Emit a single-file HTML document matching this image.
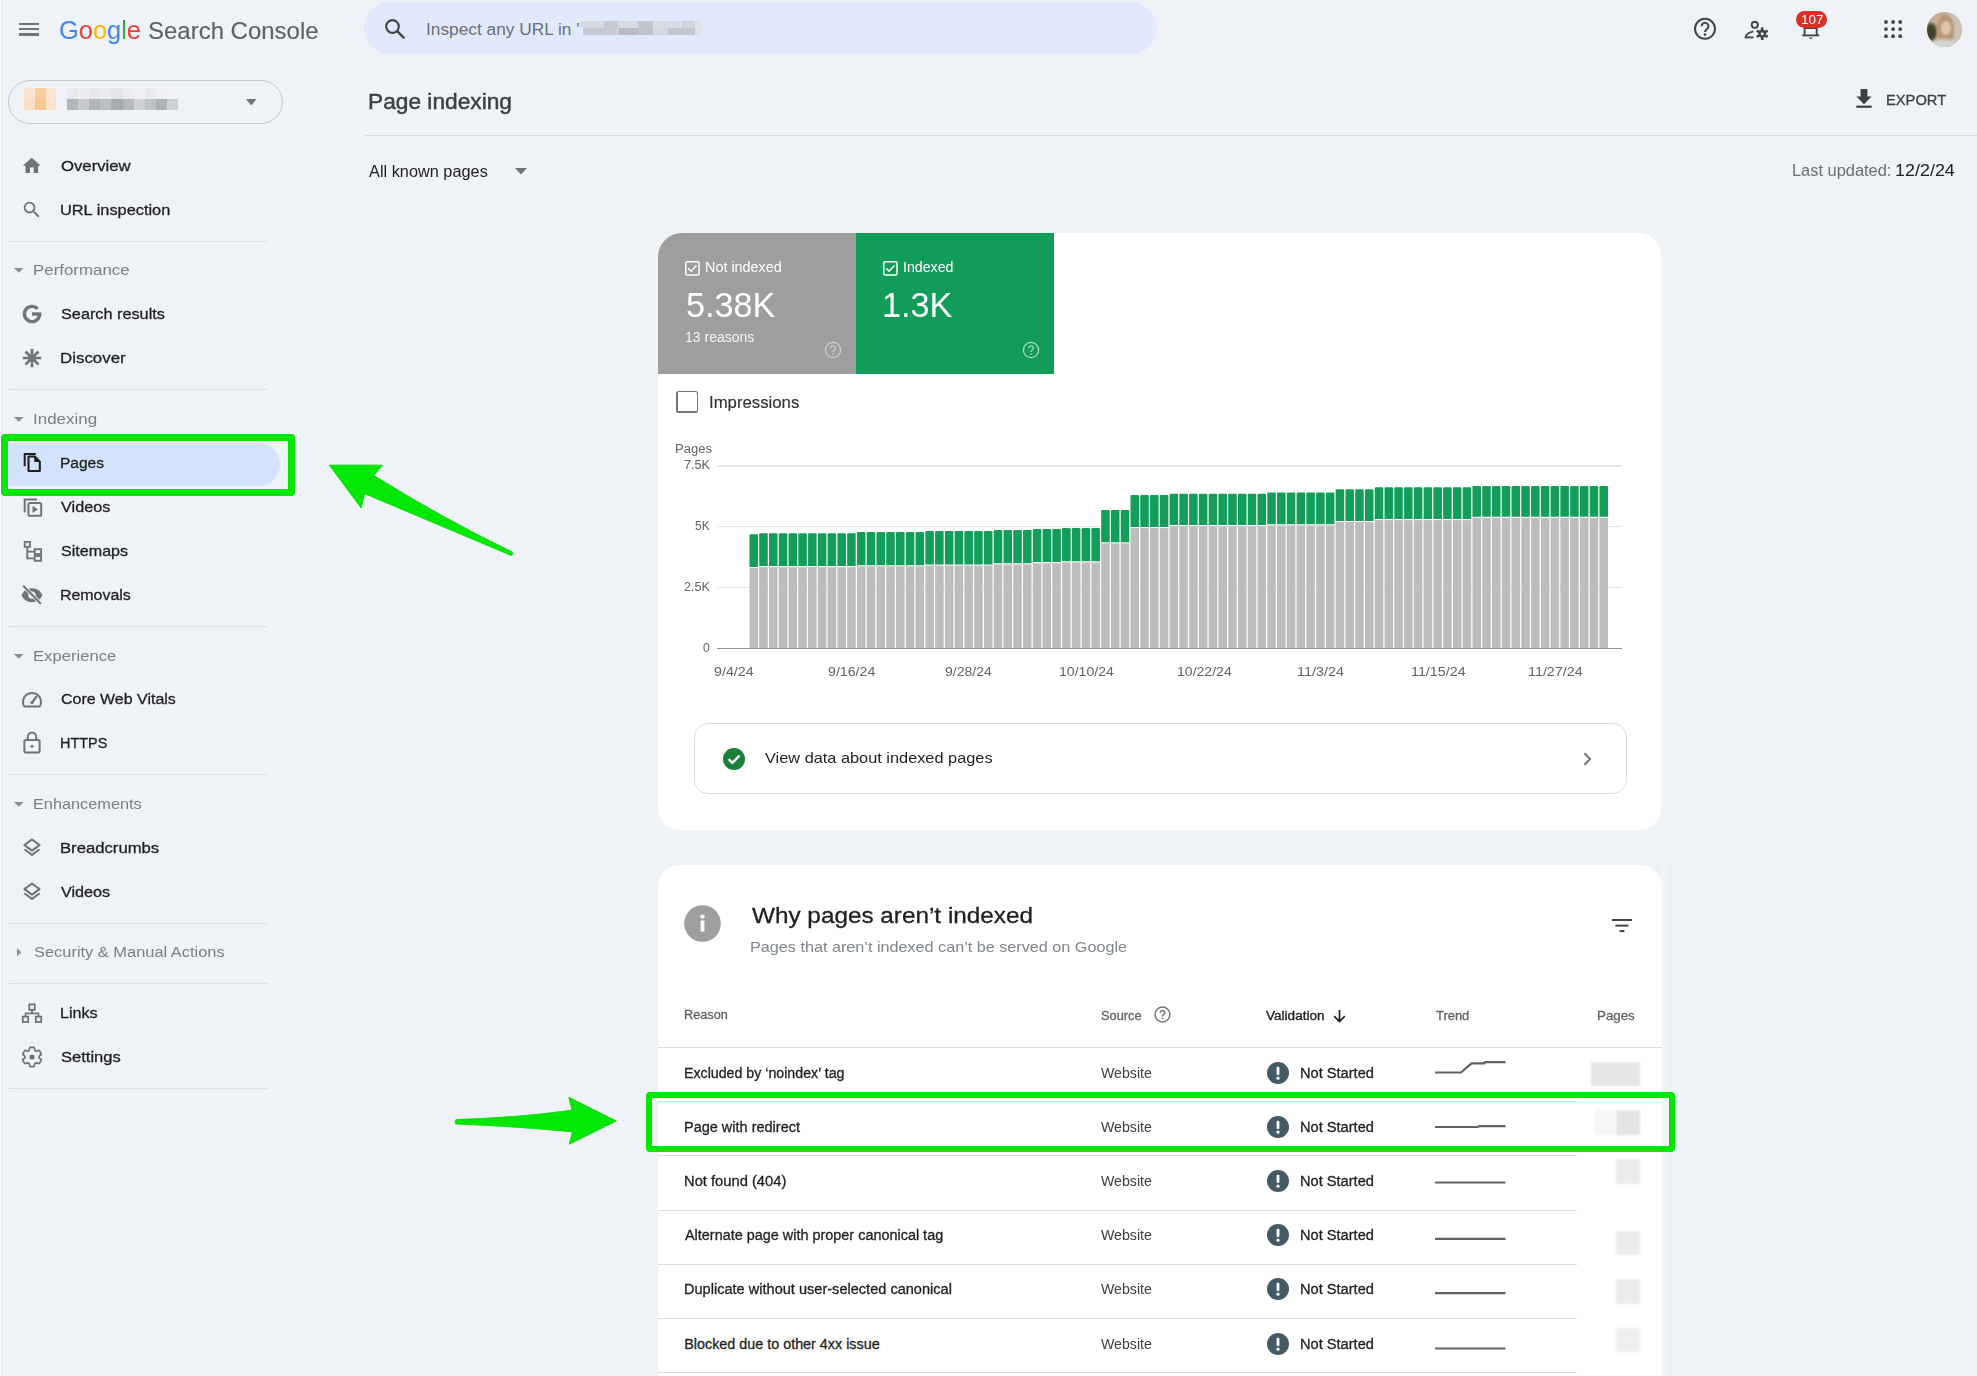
<!DOCTYPE html>
<html><head><meta charset="utf-8"><title>Page indexing - Search Console</title>
<style>
html,body{margin:0;padding:0;}
body{width:1977px;height:1376px;overflow:hidden;position:relative;background:#eff2f7;font-family:"Liberation Sans",sans-serif;}
.t{position:absolute;white-space:pre;}
svg{overflow:visible;}
</style></head><body>
<div style="position:absolute;left:0px;top:0px;width:1.2px;height:1376px;background:#fcfdfe"></div>
<div style="position:absolute;left:1.2px;top:0px;width:1.8px;height:1376px;background:#eaedf3"></div>
<div style="position:absolute;left:12px;top:220px;width:1px;height:1156px;background:#f3f6fc"></div>
<div style="position:absolute;left:19.3px;top:22.6px;width:20px;height:2.2px;background:#707478"></div>
<div style="position:absolute;left:19.3px;top:28.0px;width:20px;height:2.2px;background:#707478"></div>
<div style="position:absolute;left:19.3px;top:33.4px;width:20px;height:2.2px;background:#707478"></div>
<div style="position:absolute;left:364px;top:2px;width:793px;height:52px;background:#e1eafc;border-radius:26px"></div>
<svg style="position:absolute;left:384px;top:18px;" width="22" height="22" viewBox="0 0 22 22"><circle cx="8.5" cy="8.5" r="6.3" fill="none" stroke="#444746" stroke-width="2.2"/><line x1="13.2" y1="13.2" x2="19.5" y2="19.5" stroke="#444746" stroke-width="2.4" stroke-linecap="square"/></svg>
<div style="position:absolute;left:579.9px;top:21.2px;width:24.1px;height:6.8px;background:#d6d9e0"></div>
<div style="position:absolute;left:604.0px;top:21.2px;width:13.5px;height:6.8px;background:#c5c9d2"></div>
<div style="position:absolute;left:617.5px;top:21.2px;width:20.5px;height:6.8px;background:#d8dbe2"></div>
<div style="position:absolute;left:638.0px;top:21.2px;width:14.9px;height:6.8px;background:#c1c5ce"></div>
<div style="position:absolute;left:652.9px;top:21.2px;width:27.6px;height:6.8px;background:#d8dce6"></div>
<div style="position:absolute;left:680.5px;top:21.2px;width:14.2px;height:6.8px;background:#d0d4dc"></div>
<div style="position:absolute;left:694.6px;top:21.2px;width:7.1px;height:6.8px;background:#dfe2ea"></div>
<div style="position:absolute;left:583.1px;top:28px;width:34.3px;height:6.7px;background:#c5c9d1"></div>
<div style="position:absolute;left:617.5px;top:28px;width:20.5px;height:6.7px;background:#b9bcc5"></div>
<div style="position:absolute;left:638.0px;top:28px;width:14.9px;height:6.7px;background:#bfc3cc"></div>
<div style="position:absolute;left:652.9px;top:28px;width:14.9px;height:6.7px;background:#d3d7e0"></div>
<div style="position:absolute;left:667.7px;top:28px;width:26.9px;height:6.7px;background:#c2c6cf"></div>
<div style="position:absolute;left:694.6px;top:28px;width:7.1px;height:6.7px;background:#dde1ea"></div>
<svg style="position:absolute;left:1693px;top:17px;" width="24" height="24" viewBox="0 0 24 24"><circle cx="12" cy="11.8" r="10" fill="none" stroke="#444746" stroke-width="2"/><path d="M8.6 9.2a3.4 3.4 0 1 1 5.4 2.8c-1.2.8-2 1.3-2 3" fill="none" stroke="#444746" stroke-width="2"/><circle cx="12" cy="17.6" r="1.3" fill="#444746"/></svg>
<svg style="position:absolute;left:1744px;top:20px;" width="26" height="22" viewBox="0 0 26 22"><circle cx="10.8" cy="4.8" r="3.1" fill="none" stroke="#444746" stroke-width="1.9"/><path d="M1.4 17.4C2.2 14.4 5 12.3 8.6 11.6" fill="none" stroke="#444746" stroke-width="1.9" stroke-linecap="round"/><line x1="1.4" y1="17.4" x2="9.6" y2="17.4" stroke="#444746" stroke-width="1.9"/><circle cx="18.2" cy="13.7" r="3.9" fill="#444746"/><rect x="16.9" y="7.4" width="2.6" height="3" fill="#444746" transform="rotate(0 18.2 13.7)"/><rect x="16.9" y="7.4" width="2.6" height="3" fill="#444746" transform="rotate(60 18.2 13.7)"/><rect x="16.9" y="7.4" width="2.6" height="3" fill="#444746" transform="rotate(120 18.2 13.7)"/><rect x="16.9" y="7.4" width="2.6" height="3" fill="#444746" transform="rotate(180 18.2 13.7)"/><rect x="16.9" y="7.4" width="2.6" height="3" fill="#444746" transform="rotate(240 18.2 13.7)"/><rect x="16.9" y="7.4" width="2.6" height="3" fill="#444746" transform="rotate(300 18.2 13.7)"/><circle cx="18.2" cy="13.7" r="1.5" fill="#eff2f7"/></svg>
<svg style="position:absolute;left:1800px;top:22px;" width="22" height="20" viewBox="0 0 22 20"><path d="M4.6 13.3V6h12.1v7.3" fill="none" stroke="#444746" stroke-width="1.9"/><line x1="2.2" y1="13.4" x2="19.2" y2="13.4" stroke="#444746" stroke-width="1.9"/><path d="M8.6 15.4h4.2l-2.1 1.8z" fill="#444746"/></svg>
<div style="position:absolute;left:1796px;top:11px;width:31px;height:17px;background:#d93025;border-radius:9px"></div>
<svg style="position:absolute;left:1883.5px;top:20.3px;" width="18" height="18" viewBox="0 0 18 18"><circle cx="2.0" cy="2.0" r="1.9" fill="#444746"/><circle cx="2.0" cy="9.1" r="1.9" fill="#444746"/><circle cx="2.0" cy="16.2" r="1.9" fill="#444746"/><circle cx="9.1" cy="2.0" r="1.9" fill="#444746"/><circle cx="9.1" cy="9.1" r="1.9" fill="#444746"/><circle cx="9.1" cy="16.2" r="1.9" fill="#444746"/><circle cx="16.2" cy="2.0" r="1.9" fill="#444746"/><circle cx="16.2" cy="9.1" r="1.9" fill="#444746"/><circle cx="16.2" cy="16.2" r="1.9" fill="#444746"/></svg>
<div style="position:absolute;left:1927px;top:11.8px;width:35px;height:35px;border-radius:50%;overflow:hidden;background:#c6ae99"><div style="position:absolute;left:20px;top:0;width:16px;height:35px;background:#cbc4bc;filter:blur(2px)"></div><div style="position:absolute;left:-2px;top:11px;width:12px;height:18px;border-radius:50%;background:#3b4228;filter:blur(1.5px)"></div><div style="position:absolute;left:10px;top:3px;width:17px;height:30px;border-radius:45%;background:#b89672;filter:blur(1.2px)"></div><div style="position:absolute;left:14px;top:9px;width:10px;height:14px;border-radius:50%;background:#e0c6b0;filter:blur(1px)"></div><div style="position:absolute;left:4px;top:27px;width:26px;height:14px;border-radius:50%;background:#d4d4d2;filter:blur(1.5px)"></div></div>
<div style="position:absolute;left:8.3px;top:80.3px;width:274.7px;height:43.6px;box-sizing:border-box;border:1px solid #c4c7cc;border-radius:22px"></div>
<div style="position:absolute;left:24.0px;top:88px;width:10.8px;height:11px;background:#fbe3cf"></div>
<div style="position:absolute;left:24.0px;top:99px;width:10.8px;height:11px;background:#fce0c6"></div>
<div style="position:absolute;left:34.8px;top:88px;width:10.8px;height:11px;background:#f8cc9c"></div>
<div style="position:absolute;left:34.8px;top:99px;width:10.8px;height:11px;background:#f7c792"></div>
<div style="position:absolute;left:45.6px;top:88px;width:10.8px;height:11px;background:#fce6d2"></div>
<div style="position:absolute;left:45.6px;top:99px;width:10.8px;height:11px;background:#fce4cb"></div>
<div style="position:absolute;left:66.8px;top:88px;width:11.15px;height:11px;background:#e8eaee"></div>
<div style="position:absolute;left:66.8px;top:99px;width:11.15px;height:11px;background:#b3b6bb"></div>
<div style="position:absolute;left:78.0px;top:88px;width:11.15px;height:11px;background:#eceef1"></div>
<div style="position:absolute;left:78.0px;top:99px;width:11.15px;height:11px;background:#c8cacd"></div>
<div style="position:absolute;left:89.1px;top:88px;width:11.15px;height:11px;background:#e6e8ec"></div>
<div style="position:absolute;left:89.1px;top:99px;width:11.15px;height:11px;background:#b0b3b8"></div>
<div style="position:absolute;left:100.2px;top:88px;width:11.15px;height:11px;background:#e9ebef"></div>
<div style="position:absolute;left:100.2px;top:99px;width:11.15px;height:11px;background:#bbbec3"></div>
<div style="position:absolute;left:111.4px;top:88px;width:11.15px;height:11px;background:#e4e6ea"></div>
<div style="position:absolute;left:111.4px;top:99px;width:11.15px;height:11px;background:#a8abb0"></div>
<div style="position:absolute;left:122.5px;top:88px;width:11.15px;height:11px;background:#eaecf0"></div>
<div style="position:absolute;left:122.5px;top:99px;width:11.15px;height:11px;background:#b6b9bd"></div>
<div style="position:absolute;left:133.7px;top:88px;width:11.15px;height:11px;background:#edeff2"></div>
<div style="position:absolute;left:133.7px;top:99px;width:11.15px;height:11px;background:#cfd1d4"></div>
<div style="position:absolute;left:144.8px;top:88px;width:11.15px;height:11px;background:#e8eaee"></div>
<div style="position:absolute;left:144.8px;top:99px;width:11.15px;height:11px;background:#bfc2c6"></div>
<div style="position:absolute;left:156.0px;top:88px;width:11.15px;height:11px;background:#eef0f3"></div>
<div style="position:absolute;left:156.0px;top:99px;width:11.15px;height:11px;background:#aeb1b6"></div>
<div style="position:absolute;left:167.2px;top:88px;width:11.15px;height:11px;background:#f0f2f5"></div>
<div style="position:absolute;left:167.2px;top:99px;width:11.15px;height:11px;background:#cfd2d5"></div>
<svg style="position:absolute;left:245.5px;top:98.8px;" width="11" height="7" viewBox="0 0 11 7"><path d="M0 0h10.5L5.25 6.4z" fill="#707478"/></svg>
<div style="position:absolute;left:8.3px;top:241px;width:260px;height:1px;background:#dde0e5"></div>
<svg style="position:absolute;left:14.4px;top:268px;" width="10" height="5" viewBox="0 0 10 5"><path d="M0 0h9.6L4.8 4.8z" fill="#8a8e92"/></svg>
<div style="position:absolute;left:8.3px;top:389px;width:260px;height:1px;background:#dde0e5"></div>
<svg style="position:absolute;left:14.4px;top:416.7px;" width="10" height="5" viewBox="0 0 10 5"><path d="M0 0h9.6L4.8 4.8z" fill="#8a8e92"/></svg>
<div style="position:absolute;left:8px;top:442.5px;width:272px;height:43.2px;background:#d3e3fd;border-radius:0 22px 22px 0"></div>
<div style="position:absolute;left:8.3px;top:626px;width:260px;height:1px;background:#dde0e5"></div>
<svg style="position:absolute;left:14.4px;top:653.6px;" width="10" height="5" viewBox="0 0 10 5"><path d="M0 0h9.6L4.8 4.8z" fill="#8a8e92"/></svg>
<div style="position:absolute;left:8.3px;top:774px;width:260px;height:1px;background:#dde0e5"></div>
<svg style="position:absolute;left:14.4px;top:802.3px;" width="10" height="5" viewBox="0 0 10 5"><path d="M0 0h9.6L4.8 4.8z" fill="#8a8e92"/></svg>
<div style="position:absolute;left:8.3px;top:923px;width:260px;height:1px;background:#dde0e5"></div>
<svg style="position:absolute;left:16.5px;top:948px;" width="5" height="9" viewBox="0 0 5 9"><path d="M0 0v8.6L4.3 4.3z" fill="#8a8e92"/></svg>
<div style="position:absolute;left:8.3px;top:983px;width:260px;height:1px;background:#dde0e5"></div>
<div style="position:absolute;left:8.3px;top:1088px;width:260px;height:1px;background:#dde0e5"></div>
<svg style="position:absolute;left:1856px;top:88.5px;" width="16" height="19" viewBox="0 0 16 19"><path d="M4.6 0h6.8v7.6h4.2L8 15.2 0.4 7.6h4.2z" fill="#3c4043"/><rect x="0.4" y="16.6" width="15.2" height="2.2" fill="#3c4043"/></svg>
<div style="position:absolute;left:364px;top:135px;width:1613px;height:1px;background:#dadde2"></div>
<svg style="position:absolute;left:515px;top:168.4px;" width="12" height="7" viewBox="0 0 12 7"><path d="M0 0h12L6 6.6z" fill="#707478"/></svg>
<div style="position:absolute;left:658px;top:233px;width:1003px;height:597px;background:#fff;border-radius:24px 22px 22px 22px"></div>
<div style="position:absolute;left:658px;top:233px;width:198px;height:140.6px;background:#9e9e9e;border-radius:24px 0 0 0"></div>
<div style="position:absolute;left:856px;top:233px;width:198px;height:140.6px;background:#119d59"></div>
<svg style="position:absolute;left:684.8px;top:260.6px;" width="15" height="15" viewBox="0 0 15 15"><rect x="0.75" y="0.75" width="13.3" height="13.3" rx="1.6" fill="none" stroke="#fff" stroke-width="1.5"/><path d="M3.3 7.4l2.8 2.8 5.4-5.6" fill="none" stroke="#fff" stroke-width="1.5"/></svg>
<svg style="position:absolute;left:824.2px;top:340.9px;" width="18" height="18" viewBox="0 0 18 18"><circle cx="9" cy="9" r="7.6" fill="none" stroke="#cfcfcf" stroke-width="1.3"/><path d="M6.7 7.2a2.3 2.3 0 1 1 3.4 2c-.8.5-1.1.9-1.1 1.8" fill="none" stroke="#cfcfcf" stroke-width="1.3"/><circle cx="9" cy="12.9" r=".8" fill="#cfcfcf"/></svg>
<svg style="position:absolute;left:882.6px;top:260.6px;" width="15" height="15" viewBox="0 0 15 15"><rect x="0.75" y="0.75" width="13.3" height="13.3" rx="1.6" fill="none" stroke="#fff" stroke-width="1.5"/><path d="M3.3 7.4l2.8 2.8 5.4-5.6" fill="none" stroke="#fff" stroke-width="1.5"/></svg>
<svg style="position:absolute;left:1022px;top:340.7px;" width="18" height="18" viewBox="0 0 18 18"><circle cx="9" cy="9" r="7.6" fill="none" stroke="#a8d8bd" stroke-width="1.3"/><path d="M6.7 7.2a2.3 2.3 0 1 1 3.4 2c-.8.5-1.1.9-1.1 1.8" fill="none" stroke="#a8d8bd" stroke-width="1.3"/><circle cx="9" cy="12.9" r=".8" fill="#a8d8bd"/></svg>
<div style="position:absolute;left:676.4px;top:391.2px;width:21.2px;height:21.4px;box-sizing:border-box;border:solid #767676;border-width:1.8px 1.9px 2.7px 2.6px;border-radius:2.5px"></div>
<div style="position:absolute;left:717px;top:465px;width:905px;height:1.7px;background:#e8e8e8"></div>
<div style="position:absolute;left:717px;top:526px;width:905px;height:1px;background:#e4e4e4"></div>
<div style="position:absolute;left:717px;top:587px;width:905px;height:1px;background:#e4e4e4"></div>
<div style="position:absolute;left:717px;top:648px;width:905px;height:1px;background:#8f9499"></div>
<svg style="position:absolute;left:0px;top:0px;pointer-events:none" width="1977" height="1376" viewBox="0 0 1977 1376"><rect x="749.46" y="568.10" width="8.55" height="79.90" fill="#bdbdbd"/><path d="M749.46 567.00V535.50q0 -1.2 1.2 -1.2h6.15q1.2 0 1.2 1.2V567.00z" fill="#129d59"/><rect x="759.23" y="567.10" width="8.55" height="80.90" fill="#bdbdbd"/><path d="M759.23 566.00V534.40q0 -1.2 1.2 -1.2h6.15q1.2 0 1.2 1.2V566.00z" fill="#129d59"/><rect x="769.00" y="567.10" width="8.55" height="80.90" fill="#bdbdbd"/><path d="M769.00 566.00V534.40q0 -1.2 1.2 -1.2h6.15q1.2 0 1.2 1.2V566.00z" fill="#129d59"/><rect x="778.77" y="567.10" width="8.55" height="80.90" fill="#bdbdbd"/><path d="M778.77 566.00V534.40q0 -1.2 1.2 -1.2h6.15q1.2 0 1.2 1.2V566.00z" fill="#129d59"/><rect x="788.54" y="567.10" width="8.55" height="80.90" fill="#bdbdbd"/><path d="M788.54 566.00V534.40q0 -1.2 1.2 -1.2h6.15q1.2 0 1.2 1.2V566.00z" fill="#129d59"/><rect x="798.31" y="567.10" width="8.55" height="80.90" fill="#bdbdbd"/><path d="M798.31 566.00V534.40q0 -1.2 1.2 -1.2h6.15q1.2 0 1.2 1.2V566.00z" fill="#129d59"/><rect x="808.08" y="567.10" width="8.55" height="80.90" fill="#bdbdbd"/><path d="M808.08 566.00V534.40q0 -1.2 1.2 -1.2h6.15q1.2 0 1.2 1.2V566.00z" fill="#129d59"/><rect x="817.85" y="567.10" width="8.55" height="80.90" fill="#bdbdbd"/><path d="M817.85 566.00V534.40q0 -1.2 1.2 -1.2h6.15q1.2 0 1.2 1.2V566.00z" fill="#129d59"/><rect x="827.62" y="567.10" width="8.55" height="80.90" fill="#bdbdbd"/><path d="M827.62 566.00V534.40q0 -1.2 1.2 -1.2h6.15q1.2 0 1.2 1.2V566.00z" fill="#129d59"/><rect x="837.39" y="567.10" width="8.55" height="80.90" fill="#bdbdbd"/><path d="M837.39 566.00V534.40q0 -1.2 1.2 -1.2h6.15q1.2 0 1.2 1.2V566.00z" fill="#129d59"/><rect x="847.16" y="567.10" width="8.55" height="80.90" fill="#bdbdbd"/><path d="M847.16 566.00V534.40q0 -1.2 1.2 -1.2h6.15q1.2 0 1.2 1.2V566.00z" fill="#129d59"/><rect x="856.93" y="566.30" width="8.55" height="81.70" fill="#bdbdbd"/><path d="M856.93 565.20V533.30q0 -1.2 1.2 -1.2h6.15q1.2 0 1.2 1.2V565.20z" fill="#129d59"/><rect x="866.70" y="566.30" width="8.55" height="81.70" fill="#bdbdbd"/><path d="M866.70 565.20V533.30q0 -1.2 1.2 -1.2h6.15q1.2 0 1.2 1.2V565.20z" fill="#129d59"/><rect x="876.47" y="566.30" width="8.55" height="81.70" fill="#bdbdbd"/><path d="M876.47 565.20V533.30q0 -1.2 1.2 -1.2h6.15q1.2 0 1.2 1.2V565.20z" fill="#129d59"/><rect x="886.24" y="566.30" width="8.55" height="81.70" fill="#bdbdbd"/><path d="M886.24 565.20V533.30q0 -1.2 1.2 -1.2h6.15q1.2 0 1.2 1.2V565.20z" fill="#129d59"/><rect x="896.01" y="566.30" width="8.55" height="81.70" fill="#bdbdbd"/><path d="M896.01 565.20V533.30q0 -1.2 1.2 -1.2h6.15q1.2 0 1.2 1.2V565.20z" fill="#129d59"/><rect x="905.78" y="566.30" width="8.55" height="81.70" fill="#bdbdbd"/><path d="M905.78 565.20V533.30q0 -1.2 1.2 -1.2h6.15q1.2 0 1.2 1.2V565.20z" fill="#129d59"/><rect x="915.55" y="566.30" width="8.55" height="81.70" fill="#bdbdbd"/><path d="M915.55 565.20V533.30q0 -1.2 1.2 -1.2h6.15q1.2 0 1.2 1.2V565.20z" fill="#129d59"/><rect x="925.32" y="565.50" width="8.55" height="82.50" fill="#bdbdbd"/><path d="M925.32 564.40V532.30q0 -1.2 1.2 -1.2h6.15q1.2 0 1.2 1.2V564.40z" fill="#129d59"/><rect x="935.09" y="565.50" width="8.55" height="82.50" fill="#bdbdbd"/><path d="M935.09 564.40V532.30q0 -1.2 1.2 -1.2h6.15q1.2 0 1.2 1.2V564.40z" fill="#129d59"/><rect x="944.86" y="565.50" width="8.55" height="82.50" fill="#bdbdbd"/><path d="M944.86 564.40V532.30q0 -1.2 1.2 -1.2h6.15q1.2 0 1.2 1.2V564.40z" fill="#129d59"/><rect x="954.63" y="565.50" width="8.55" height="82.50" fill="#bdbdbd"/><path d="M954.63 564.40V532.30q0 -1.2 1.2 -1.2h6.15q1.2 0 1.2 1.2V564.40z" fill="#129d59"/><rect x="964.40" y="565.50" width="8.55" height="82.50" fill="#bdbdbd"/><path d="M964.40 564.40V532.30q0 -1.2 1.2 -1.2h6.15q1.2 0 1.2 1.2V564.40z" fill="#129d59"/><rect x="974.17" y="565.50" width="8.55" height="82.50" fill="#bdbdbd"/><path d="M974.17 564.40V532.30q0 -1.2 1.2 -1.2h6.15q1.2 0 1.2 1.2V564.40z" fill="#129d59"/><rect x="983.94" y="565.50" width="8.55" height="82.50" fill="#bdbdbd"/><path d="M983.94 564.40V532.30q0 -1.2 1.2 -1.2h6.15q1.2 0 1.2 1.2V564.40z" fill="#129d59"/><rect x="993.71" y="564.40" width="8.55" height="83.60" fill="#bdbdbd"/><path d="M993.71 563.30V531.30q0 -1.2 1.2 -1.2h6.15q1.2 0 1.2 1.2V563.30z" fill="#129d59"/><rect x="1003.48" y="564.40" width="8.55" height="83.60" fill="#bdbdbd"/><path d="M1003.48 563.30V531.30q0 -1.2 1.2 -1.2h6.15q1.2 0 1.2 1.2V563.30z" fill="#129d59"/><rect x="1013.25" y="564.40" width="8.55" height="83.60" fill="#bdbdbd"/><path d="M1013.25 563.30V531.30q0 -1.2 1.2 -1.2h6.15q1.2 0 1.2 1.2V563.30z" fill="#129d59"/><rect x="1023.02" y="564.40" width="8.55" height="83.60" fill="#bdbdbd"/><path d="M1023.02 563.30V531.30q0 -1.2 1.2 -1.2h6.15q1.2 0 1.2 1.2V563.30z" fill="#129d59"/><rect x="1032.79" y="563.20" width="8.55" height="84.80" fill="#bdbdbd"/><path d="M1032.79 562.10V530.20q0 -1.2 1.2 -1.2h6.15q1.2 0 1.2 1.2V562.10z" fill="#129d59"/><rect x="1042.56" y="563.20" width="8.55" height="84.80" fill="#bdbdbd"/><path d="M1042.56 562.10V530.20q0 -1.2 1.2 -1.2h6.15q1.2 0 1.2 1.2V562.10z" fill="#129d59"/><rect x="1052.33" y="563.20" width="8.55" height="84.80" fill="#bdbdbd"/><path d="M1052.33 562.10V530.20q0 -1.2 1.2 -1.2h6.15q1.2 0 1.2 1.2V562.10z" fill="#129d59"/><rect x="1062.10" y="562.40" width="8.55" height="85.60" fill="#bdbdbd"/><path d="M1062.10 561.30V529.30q0 -1.2 1.2 -1.2h6.15q1.2 0 1.2 1.2V561.30z" fill="#129d59"/><rect x="1071.87" y="562.40" width="8.55" height="85.60" fill="#bdbdbd"/><path d="M1071.87 561.30V529.30q0 -1.2 1.2 -1.2h6.15q1.2 0 1.2 1.2V561.30z" fill="#129d59"/><rect x="1081.64" y="562.40" width="8.55" height="85.60" fill="#bdbdbd"/><path d="M1081.64 561.30V529.30q0 -1.2 1.2 -1.2h6.15q1.2 0 1.2 1.2V561.30z" fill="#129d59"/><rect x="1091.41" y="562.40" width="8.55" height="85.60" fill="#bdbdbd"/><path d="M1091.41 561.30V529.30q0 -1.2 1.2 -1.2h6.15q1.2 0 1.2 1.2V561.30z" fill="#129d59"/><rect x="1101.18" y="543.30" width="8.55" height="104.70" fill="#bdbdbd"/><path d="M1101.18 542.20V511.20q0 -1.2 1.2 -1.2h6.15q1.2 0 1.2 1.2V542.20z" fill="#129d59"/><rect x="1110.95" y="543.30" width="8.55" height="104.70" fill="#bdbdbd"/><path d="M1110.95 542.20V511.20q0 -1.2 1.2 -1.2h6.15q1.2 0 1.2 1.2V542.20z" fill="#129d59"/><rect x="1120.72" y="543.30" width="8.55" height="104.70" fill="#bdbdbd"/><path d="M1120.72 542.20V511.20q0 -1.2 1.2 -1.2h6.15q1.2 0 1.2 1.2V542.20z" fill="#129d59"/><rect x="1130.49" y="528.10" width="8.55" height="119.90" fill="#bdbdbd"/><path d="M1130.49 527.00V496.20q0 -1.2 1.2 -1.2h6.15q1.2 0 1.2 1.2V527.00z" fill="#129d59"/><rect x="1140.26" y="528.10" width="8.55" height="119.90" fill="#bdbdbd"/><path d="M1140.26 527.00V496.20q0 -1.2 1.2 -1.2h6.15q1.2 0 1.2 1.2V527.00z" fill="#129d59"/><rect x="1150.03" y="528.10" width="8.55" height="119.90" fill="#bdbdbd"/><path d="M1150.03 527.00V496.20q0 -1.2 1.2 -1.2h6.15q1.2 0 1.2 1.2V527.00z" fill="#129d59"/><rect x="1159.80" y="528.10" width="8.55" height="119.90" fill="#bdbdbd"/><path d="M1159.80 527.00V496.20q0 -1.2 1.2 -1.2h6.15q1.2 0 1.2 1.2V527.00z" fill="#129d59"/><rect x="1169.57" y="526.20" width="8.55" height="121.80" fill="#bdbdbd"/><path d="M1169.57 525.10V494.90q0 -1.2 1.2 -1.2h6.15q1.2 0 1.2 1.2V525.10z" fill="#129d59"/><rect x="1179.34" y="526.20" width="8.55" height="121.80" fill="#bdbdbd"/><path d="M1179.34 525.10V494.90q0 -1.2 1.2 -1.2h6.15q1.2 0 1.2 1.2V525.10z" fill="#129d59"/><rect x="1189.11" y="526.20" width="8.55" height="121.80" fill="#bdbdbd"/><path d="M1189.11 525.10V494.90q0 -1.2 1.2 -1.2h6.15q1.2 0 1.2 1.2V525.10z" fill="#129d59"/><rect x="1198.88" y="526.20" width="8.55" height="121.80" fill="#bdbdbd"/><path d="M1198.88 525.10V494.90q0 -1.2 1.2 -1.2h6.15q1.2 0 1.2 1.2V525.10z" fill="#129d59"/><rect x="1208.65" y="526.20" width="8.55" height="121.80" fill="#bdbdbd"/><path d="M1208.65 525.10V494.90q0 -1.2 1.2 -1.2h6.15q1.2 0 1.2 1.2V525.10z" fill="#129d59"/><rect x="1218.42" y="526.20" width="8.55" height="121.80" fill="#bdbdbd"/><path d="M1218.42 525.10V494.90q0 -1.2 1.2 -1.2h6.15q1.2 0 1.2 1.2V525.10z" fill="#129d59"/><rect x="1228.19" y="526.20" width="8.55" height="121.80" fill="#bdbdbd"/><path d="M1228.19 525.10V494.90q0 -1.2 1.2 -1.2h6.15q1.2 0 1.2 1.2V525.10z" fill="#129d59"/><rect x="1237.96" y="526.20" width="8.55" height="121.80" fill="#bdbdbd"/><path d="M1237.96 525.10V494.90q0 -1.2 1.2 -1.2h6.15q1.2 0 1.2 1.2V525.10z" fill="#129d59"/><rect x="1247.73" y="526.20" width="8.55" height="121.80" fill="#bdbdbd"/><path d="M1247.73 525.10V494.90q0 -1.2 1.2 -1.2h6.15q1.2 0 1.2 1.2V525.10z" fill="#129d59"/><rect x="1257.50" y="526.20" width="8.55" height="121.80" fill="#bdbdbd"/><path d="M1257.50 525.10V494.90q0 -1.2 1.2 -1.2h6.15q1.2 0 1.2 1.2V525.10z" fill="#129d59"/><rect x="1267.27" y="525.40" width="8.55" height="122.60" fill="#bdbdbd"/><path d="M1267.27 524.30V493.80q0 -1.2 1.2 -1.2h6.15q1.2 0 1.2 1.2V524.30z" fill="#129d59"/><rect x="1277.04" y="525.40" width="8.55" height="122.60" fill="#bdbdbd"/><path d="M1277.04 524.30V493.80q0 -1.2 1.2 -1.2h6.15q1.2 0 1.2 1.2V524.30z" fill="#129d59"/><rect x="1286.81" y="525.40" width="8.55" height="122.60" fill="#bdbdbd"/><path d="M1286.81 524.30V493.80q0 -1.2 1.2 -1.2h6.15q1.2 0 1.2 1.2V524.30z" fill="#129d59"/><rect x="1296.58" y="525.40" width="8.55" height="122.60" fill="#bdbdbd"/><path d="M1296.58 524.30V493.80q0 -1.2 1.2 -1.2h6.15q1.2 0 1.2 1.2V524.30z" fill="#129d59"/><rect x="1306.35" y="525.40" width="8.55" height="122.60" fill="#bdbdbd"/><path d="M1306.35 524.30V493.80q0 -1.2 1.2 -1.2h6.15q1.2 0 1.2 1.2V524.30z" fill="#129d59"/><rect x="1316.12" y="525.40" width="8.55" height="122.60" fill="#bdbdbd"/><path d="M1316.12 524.30V493.80q0 -1.2 1.2 -1.2h6.15q1.2 0 1.2 1.2V524.30z" fill="#129d59"/><rect x="1325.89" y="525.40" width="8.55" height="122.60" fill="#bdbdbd"/><path d="M1325.89 524.30V493.80q0 -1.2 1.2 -1.2h6.15q1.2 0 1.2 1.2V524.30z" fill="#129d59"/><rect x="1335.66" y="522.10" width="8.55" height="125.90" fill="#bdbdbd"/><path d="M1335.66 521.00V490.50q0 -1.2 1.2 -1.2h6.15q1.2 0 1.2 1.2V521.00z" fill="#129d59"/><rect x="1345.43" y="522.10" width="8.55" height="125.90" fill="#bdbdbd"/><path d="M1345.43 521.00V490.50q0 -1.2 1.2 -1.2h6.15q1.2 0 1.2 1.2V521.00z" fill="#129d59"/><rect x="1355.20" y="522.10" width="8.55" height="125.90" fill="#bdbdbd"/><path d="M1355.20 521.00V490.50q0 -1.2 1.2 -1.2h6.15q1.2 0 1.2 1.2V521.00z" fill="#129d59"/><rect x="1364.97" y="522.10" width="8.55" height="125.90" fill="#bdbdbd"/><path d="M1364.97 521.00V490.50q0 -1.2 1.2 -1.2h6.15q1.2 0 1.2 1.2V521.00z" fill="#129d59"/><rect x="1374.74" y="520.10" width="8.55" height="127.90" fill="#bdbdbd"/><path d="M1374.74 519.00V488.40q0 -1.2 1.2 -1.2h6.15q1.2 0 1.2 1.2V519.00z" fill="#129d59"/><rect x="1384.51" y="520.10" width="8.55" height="127.90" fill="#bdbdbd"/><path d="M1384.51 519.00V488.40q0 -1.2 1.2 -1.2h6.15q1.2 0 1.2 1.2V519.00z" fill="#129d59"/><rect x="1394.28" y="520.10" width="8.55" height="127.90" fill="#bdbdbd"/><path d="M1394.28 519.00V488.40q0 -1.2 1.2 -1.2h6.15q1.2 0 1.2 1.2V519.00z" fill="#129d59"/><rect x="1404.05" y="520.10" width="8.55" height="127.90" fill="#bdbdbd"/><path d="M1404.05 519.00V488.40q0 -1.2 1.2 -1.2h6.15q1.2 0 1.2 1.2V519.00z" fill="#129d59"/><rect x="1413.82" y="520.10" width="8.55" height="127.90" fill="#bdbdbd"/><path d="M1413.82 519.00V488.40q0 -1.2 1.2 -1.2h6.15q1.2 0 1.2 1.2V519.00z" fill="#129d59"/><rect x="1423.59" y="520.10" width="8.55" height="127.90" fill="#bdbdbd"/><path d="M1423.59 519.00V488.40q0 -1.2 1.2 -1.2h6.15q1.2 0 1.2 1.2V519.00z" fill="#129d59"/><rect x="1433.36" y="520.10" width="8.55" height="127.90" fill="#bdbdbd"/><path d="M1433.36 519.00V488.40q0 -1.2 1.2 -1.2h6.15q1.2 0 1.2 1.2V519.00z" fill="#129d59"/><rect x="1443.13" y="520.10" width="8.55" height="127.90" fill="#bdbdbd"/><path d="M1443.13 519.00V488.40q0 -1.2 1.2 -1.2h6.15q1.2 0 1.2 1.2V519.00z" fill="#129d59"/><rect x="1452.90" y="520.10" width="8.55" height="127.90" fill="#bdbdbd"/><path d="M1452.90 519.00V488.40q0 -1.2 1.2 -1.2h6.15q1.2 0 1.2 1.2V519.00z" fill="#129d59"/><rect x="1462.67" y="520.10" width="8.55" height="127.90" fill="#bdbdbd"/><path d="M1462.67 519.00V488.40q0 -1.2 1.2 -1.2h6.15q1.2 0 1.2 1.2V519.00z" fill="#129d59"/><rect x="1472.44" y="517.80" width="8.55" height="130.20" fill="#bdbdbd"/><path d="M1472.44 516.70V487.30q0 -1.2 1.2 -1.2h6.15q1.2 0 1.2 1.2V516.70z" fill="#129d59"/><rect x="1482.21" y="517.80" width="8.55" height="130.20" fill="#bdbdbd"/><path d="M1482.21 516.70V487.30q0 -1.2 1.2 -1.2h6.15q1.2 0 1.2 1.2V516.70z" fill="#129d59"/><rect x="1491.98" y="517.80" width="8.55" height="130.20" fill="#bdbdbd"/><path d="M1491.98 516.70V487.30q0 -1.2 1.2 -1.2h6.15q1.2 0 1.2 1.2V516.70z" fill="#129d59"/><rect x="1501.75" y="517.80" width="8.55" height="130.20" fill="#bdbdbd"/><path d="M1501.75 516.70V487.30q0 -1.2 1.2 -1.2h6.15q1.2 0 1.2 1.2V516.70z" fill="#129d59"/><rect x="1511.52" y="517.80" width="8.55" height="130.20" fill="#bdbdbd"/><path d="M1511.52 516.70V487.30q0 -1.2 1.2 -1.2h6.15q1.2 0 1.2 1.2V516.70z" fill="#129d59"/><rect x="1521.29" y="517.80" width="8.55" height="130.20" fill="#bdbdbd"/><path d="M1521.29 516.70V487.30q0 -1.2 1.2 -1.2h6.15q1.2 0 1.2 1.2V516.70z" fill="#129d59"/><rect x="1531.06" y="517.80" width="8.55" height="130.20" fill="#bdbdbd"/><path d="M1531.06 516.70V487.30q0 -1.2 1.2 -1.2h6.15q1.2 0 1.2 1.2V516.70z" fill="#129d59"/><rect x="1540.83" y="517.80" width="8.55" height="130.20" fill="#bdbdbd"/><path d="M1540.83 516.70V487.30q0 -1.2 1.2 -1.2h6.15q1.2 0 1.2 1.2V516.70z" fill="#129d59"/><rect x="1550.60" y="517.80" width="8.55" height="130.20" fill="#bdbdbd"/><path d="M1550.60 516.70V487.30q0 -1.2 1.2 -1.2h6.15q1.2 0 1.2 1.2V516.70z" fill="#129d59"/><rect x="1560.37" y="517.80" width="8.55" height="130.20" fill="#bdbdbd"/><path d="M1560.37 516.70V487.30q0 -1.2 1.2 -1.2h6.15q1.2 0 1.2 1.2V516.70z" fill="#129d59"/><rect x="1570.14" y="517.80" width="8.55" height="130.20" fill="#bdbdbd"/><path d="M1570.14 516.70V487.30q0 -1.2 1.2 -1.2h6.15q1.2 0 1.2 1.2V516.70z" fill="#129d59"/><rect x="1579.91" y="517.80" width="8.55" height="130.20" fill="#bdbdbd"/><path d="M1579.91 516.70V487.30q0 -1.2 1.2 -1.2h6.15q1.2 0 1.2 1.2V516.70z" fill="#129d59"/><rect x="1589.68" y="517.80" width="8.55" height="130.20" fill="#bdbdbd"/><path d="M1589.68 516.70V487.30q0 -1.2 1.2 -1.2h6.15q1.2 0 1.2 1.2V516.70z" fill="#129d59"/><rect x="1599.45" y="517.80" width="8.55" height="130.20" fill="#bdbdbd"/><path d="M1599.45 516.70V487.30q0 -1.2 1.2 -1.2h6.15q1.2 0 1.2 1.2V516.70z" fill="#129d59"/></svg>
<div style="position:absolute;left:693.8px;top:723.3px;width:933.2px;height:71.2px;box-sizing:border-box;border:1px solid #dadce0;border-radius:14px"></div>
<svg style="position:absolute;left:722.8px;top:747.7px;" width="22" height="22" viewBox="0 0 22 22"><circle cx="11" cy="11" r="11" fill="#188038"/><path d="M5.6 11.2l3.7 3.7 7.2-7.3" fill="none" stroke="#fff" stroke-width="2.4"/></svg>
<svg style="position:absolute;left:1583px;top:751.5px;" width="10" height="14" viewBox="0 0 10 14"><path d="M1.5 1.2l5.6 5.8-5.6 5.8" fill="none" stroke="#6f7377" stroke-width="2"/></svg>
<div style="position:absolute;left:658px;top:865px;width:1004px;height:600px;background:#fff;border-radius:22px 22px 0 0"></div>
<svg style="position:absolute;left:683.7px;top:904.7px;" width="37" height="37" viewBox="0 0 37 37"><circle cx="18.5" cy="18.5" r="18.3" fill="#9e9e9e"/><circle cx="18.5" cy="11.6" r="2.2" fill="#fff"/><rect x="16.6" y="15.6" width="3.8" height="11" fill="#fff"/></svg>
<svg style="position:absolute;left:1612px;top:919.3px;" width="22" height="16" viewBox="0 0 22 16"><rect x="0" y="0" width="20" height="2" fill="#444746"/><rect x="3.4" y="5.6" width="13" height="2" fill="#444746"/><rect x="7.6" y="11.1" width="4.8" height="2" fill="#444746"/></svg>
<svg style="position:absolute;left:1154px;top:1006px;" width="17" height="17" viewBox="0 0 17 17"><circle cx="8.5" cy="8.5" r="7.4" fill="none" stroke="#707478" stroke-width="1.5"/><path d="M6.3 6.7a2.2 2.2 0 1 1 3.3 1.9c-.8.5-1.1.9-1.1 1.8" fill="none" stroke="#707478" stroke-width="1.5"/><circle cx="8.5" cy="12.4" r=".85" fill="#707478"/></svg>
<svg style="position:absolute;left:1333px;top:1009.5px;" width="13" height="13" viewBox="0 0 13 13"><path d="M6.5 0v11.2M1.2 6.2l5.3 5.3 5.3-5.3" fill="none" stroke="#1f1f1f" stroke-width="1.7"/></svg>
<div style="position:absolute;left:658px;top:1047px;width:1004px;height:1px;background:#dcdcdc"></div>
<svg style="position:absolute;left:1267.2px;top:1061.8px;" width="22" height="22" viewBox="0 0 22 22"><circle cx="11" cy="11" r="11" fill="#455a64"/><rect x="9.6" y="4.8" width="2.8" height="8.2" rx="1" fill="#fff"/><circle cx="11" cy="16.2" r="1.6" fill="#fff"/></svg>
<div style="position:absolute;left:658px;top:1101.3px;width:919px;height:1px;background:#dcdcdc"></div>
<svg style="position:absolute;left:1267.2px;top:1115.95px;" width="22" height="22" viewBox="0 0 22 22"><circle cx="11" cy="11" r="11" fill="#455a64"/><rect x="9.6" y="4.8" width="2.8" height="8.2" rx="1" fill="#fff"/><circle cx="11" cy="16.2" r="1.6" fill="#fff"/></svg>
<div style="position:absolute;left:658px;top:1155.45px;width:919px;height:1px;background:#dcdcdc"></div>
<svg style="position:absolute;left:1267.2px;top:1170.1px;" width="22" height="22" viewBox="0 0 22 22"><circle cx="11" cy="11" r="11" fill="#455a64"/><rect x="9.6" y="4.8" width="2.8" height="8.2" rx="1" fill="#fff"/><circle cx="11" cy="16.2" r="1.6" fill="#fff"/></svg>
<div style="position:absolute;left:658px;top:1209.6px;width:919px;height:1px;background:#dcdcdc"></div>
<svg style="position:absolute;left:1267.2px;top:1224.25px;" width="22" height="22" viewBox="0 0 22 22"><circle cx="11" cy="11" r="11" fill="#455a64"/><rect x="9.6" y="4.8" width="2.8" height="8.2" rx="1" fill="#fff"/><circle cx="11" cy="16.2" r="1.6" fill="#fff"/></svg>
<div style="position:absolute;left:658px;top:1263.75px;width:919px;height:1px;background:#dcdcdc"></div>
<svg style="position:absolute;left:1267.2px;top:1278.3999999999999px;" width="22" height="22" viewBox="0 0 22 22"><circle cx="11" cy="11" r="11" fill="#455a64"/><rect x="9.6" y="4.8" width="2.8" height="8.2" rx="1" fill="#fff"/><circle cx="11" cy="16.2" r="1.6" fill="#fff"/></svg>
<div style="position:absolute;left:658px;top:1317.8999999999999px;width:919px;height:1px;background:#dcdcdc"></div>
<svg style="position:absolute;left:1267.2px;top:1332.55px;" width="22" height="22" viewBox="0 0 22 22"><circle cx="11" cy="11" r="11" fill="#455a64"/><rect x="9.6" y="4.8" width="2.8" height="8.2" rx="1" fill="#fff"/><circle cx="11" cy="16.2" r="1.6" fill="#fff"/></svg>
<div style="position:absolute;left:658px;top:1372.05px;width:919px;height:1px;background:#dcdcdc"></div>
<svg style="position:absolute;left:0px;top:0px;" width="1977" height="1376" viewBox="0 0 1977 1376"><path d="M1435 1072.5H1461L1471.5 1063.4H1484L1485 1062.2H1505.5" fill="none" stroke="#5f6368" stroke-width="2.2"/><path d="M1435 1127H1470H1478L1479 1126.2H1505.5" fill="none" stroke="#5f6368" stroke-width="2.2"/><path d="M1435 1182.5H1505.5" fill="none" stroke="#5f6368" stroke-width="2.2"/><path d="M1435 1238.8H1505.5" fill="none" stroke="#5f6368" stroke-width="2.2"/><path d="M1435 1293.2H1505.5" fill="none" stroke="#5f6368" stroke-width="2.2"/><path d="M1435 1348.5H1505.5" fill="none" stroke="#5f6368" stroke-width="2.2"/></svg>
<div style="position:absolute;left:1591.2px;top:1062px;width:48.799999999999955px;height:23.799999999999955px;background:#e6e6e6;filter:blur(1px)"></div>
<div style="position:absolute;left:1616px;top:1110px;width:24px;height:24.799999999999955px;background:#e4e4e4;filter:blur(1px)"></div>
<div style="position:absolute;left:1595px;top:1110px;width:21px;height:24.799999999999955px;background:#f6f6f6;filter:blur(1px)"></div>
<div style="position:absolute;left:1616px;top:1159px;width:24px;height:25px;background:#ececec;filter:blur(1px)"></div>
<div style="position:absolute;left:1616px;top:1230.8px;width:24px;height:24.200000000000045px;background:#ececec;filter:blur(1px)"></div>
<div style="position:absolute;left:1616px;top:1279px;width:24px;height:25px;background:#ececec;filter:blur(1px)"></div>
<div style="position:absolute;left:1616px;top:1328px;width:24px;height:23.700000000000045px;background:#efefef;filter:blur(1px)"></div>
<div style="position:absolute;left:1662px;top:865px;width:4px;height:511px;background:#f4f5f8"></div>
<svg style="position:absolute;left:21px;top:155.3px;" width="21.6" height="21.6" viewBox="0 0 24 24"><path d="M10 20v-6h4v6h5v-8h3L12 3 2 12h3v8z" fill="#707478"/></svg>
<svg style="position:absolute;left:20.8px;top:199.3px;" width="21.6" height="21.6" viewBox="0 0 24 24"><path d="M15.5 14h-.79l-.28-.27A6.471 6.471 0 0 0 16 9.5 6.5 6.5 0 1 0 9.5 16c1.61 0 3.09-.59 4.23-1.57l.27.28v.79l5 4.99L20.49 19l-4.99-5zm-6 0C7.01 14 5 11.99 5 9.5S7.01 5 9.5 5 14 7.01 14 9.5 11.99 14 9.5 14z" fill="#707478"/></svg>
<svg style="position:absolute;left:19.75px;top:301.7px;" width="24.0" height="24.0" viewBox="0 0 24 24"><path d="M17.65 6.91A7.6 7.6 0 1 0 19.6 12" fill="none" stroke="#707478" stroke-width="3.4"/><path d="M12 10.3h9.3v3.4H12z" fill="#707478"/></svg>
<svg style="position:absolute;left:19.9px;top:345.9px;" width="24.0" height="24.0" viewBox="0 0 24 24"><g stroke="#707478" stroke-width="2.7"><path d="M12 2.8v18.4M2.8 12h18.4M5.5 5.5l13 13M18.5 5.5l-13 13"/></g></svg>
<svg style="position:absolute;left:19.6px;top:450.4px;" width="24.0" height="24.0" viewBox="0 0 24 24"><path d="M4.7 16.3V4h11.1" fill="none" stroke="#1f1f1f" stroke-width="2"/><path d="M8.5 6.5h6.3l5 5.2V21H8.5z" fill="none" stroke="#1f1f1f" stroke-width="2.1" stroke-linejoin="round"/><path d="M14.3 6.3v5.8h5.7z" fill="#1f1f1f"/></svg>
<svg style="position:absolute;left:19.6px;top:495px;" width="24.0" height="24.0" viewBox="0 0 24 24"><path d="M4.7 17.5V4.5h12.3" fill="none" stroke="#707478" stroke-width="2"/><rect x="8.4" y="8" width="12.8" height="12.8" rx="1.6" fill="none" stroke="#707478" stroke-width="2"/><path d="M12.5 10.8v7.2l5.5-3.6z" fill="#707478"/></svg>
<svg style="position:absolute;left:19.6px;top:539px;" width="24.0" height="24.0" viewBox="0 0 24 24"><g fill="none" stroke="#707478" stroke-width="1.9"><rect x="4.7" y="2.9" width="5.3" height="5" /><rect x="14.7" y="10.2" width="6.4" height="4.8"/><rect x="14.7" y="17" width="6.4" height="4.8"/><path d="M7.3 8v11.4h7.4M7.3 12.6h7.4"/></g></svg>
<svg style="position:absolute;left:19.9px;top:583.2px;" width="24.0" height="24.0" viewBox="0 0 24 24"><path d="M12 5.2C7 5.2 3 8.4 1.8 12.2 3 16 7 19.2 12 19.2s9-3.2 10.2-7C21 8.4 17 5.2 12 5.2z" fill="#707478"/><circle cx="12" cy="12.2" r="3.6" fill="#eff2f7"/><path d="M3.2 2.8l17.6 18" stroke="#eff2f7" stroke-width="3.6"/><path d="M3.2 2.8l17.6 18" stroke="#707478" stroke-width="2"/></svg>
<svg style="position:absolute;left:19.9px;top:688.2px;" width="24.0" height="24.0" viewBox="0 0 24 24"><path d="M4.3 18.6A9 9 0 1 1 19.7 18.6z" fill="none" stroke="#707478" stroke-width="2" stroke-linejoin="round"/><path d="M12 14.6l4.2-5.6" stroke="#707478" stroke-width="2.2" stroke-linecap="round"/><circle cx="12" cy="14.6" r="1.6" fill="#707478"/></svg>
<svg style="position:absolute;left:19.9px;top:730px;" width="24.0" height="24.0" viewBox="0 0 24 24"><rect x="4.4" y="10" width="15.2" height="12.6" rx="1.8" fill="none" stroke="#707478" stroke-width="2"/><path d="M7.8 10V6.6a4.2 4.2 0 0 1 8.4 0V10" fill="none" stroke="#707478" stroke-width="2"/><circle cx="12" cy="16.3" r="1.5" fill="#707478"/></svg>
<svg style="position:absolute;left:19.9px;top:835.5px;" width="24.0" height="24.0" viewBox="0 0 24 24"><path d="M12 3.5l7.6 5.6L12 14.6 4.4 9.1z" fill="none" stroke="#707478" stroke-width="2" stroke-linejoin="round"/><path d="M4.4 13.3l7.6 5.6 7.6-5.6" fill="none" stroke="#707478" stroke-width="2" stroke-linejoin="round"/></svg>
<svg style="position:absolute;left:19.9px;top:880px;" width="24.0" height="24.0" viewBox="0 0 24 24"><path d="M12 3.5l7.6 5.6L12 14.6 4.4 9.1z" fill="none" stroke="#707478" stroke-width="2" stroke-linejoin="round"/><path d="M4.4 13.3l7.6 5.6 7.6-5.6" fill="none" stroke="#707478" stroke-width="2" stroke-linejoin="round"/></svg>
<svg style="position:absolute;left:19.9px;top:1000.5px;" width="24.0" height="24.0" viewBox="0 0 24 24"><g fill="none" stroke="#707478" stroke-width="1.8"><rect x="9.3" y="3.4" width="5.4" height="5.4"/><rect x="2.8" y="15.6" width="5.4" height="5.4"/><rect x="15.8" y="15.6" width="5.4" height="5.4"/><path d="M12 8.8v3.6M5.5 15.6v-3.2h13v3.2"/></g></svg>
<svg style="position:absolute;left:20.2px;top:1045px;" width="24.0" height="24.0" viewBox="0 0 24 24"><path d="M19.14 12.94c.04-.3.06-.61.06-.94 0-.32-.02-.64-.07-.94l2.03-1.58c.18-.14.23-.41.12-.61l-1.92-3.32c-.12-.22-.37-.29-.59-.22l-2.39.96c-.5-.38-1.03-.7-1.62-.94l-.36-2.54c-.04-.24-.24-.41-.48-.41h-3.84c-.24 0-.43.17-.47.41l-.36 2.54c-.59.24-1.13.57-1.62.94l-2.39-.96c-.22-.08-.47 0-.59.22L2.74 8.87c-.12.21-.08.47.12.61l2.03 1.58c-.05.3-.09.63-.09.94s.02.64.07.94l-2.030 1.58c-.18.14-.23.41-.12.61l1.92 3.32c.12.22.37.29.59.22l2.39-.96c.5.38 1.03.7 1.62.94l.36 2.54c.05.24.24.41.48.41h3.84c.24 0 .44-.17.47-.41l.36-2.54c.59-.24 1.13-.56 1.62-.94l2.39.96c.22.08.47 0 .59-.22l1.92-3.32c.12-.22.07-.47-.12-.61l-2.01-1.58z" fill="none" stroke="#707478" stroke-width="1.7" stroke-linejoin="round"/><circle cx="12" cy="12" r="2.6" fill="#707478"/></svg>
<div class="t" style="left:59.02px;top:18.05px;font-size:25.94px;line-height:25.94px;font-weight:400;color:#1f1f1f;transform:scaleX(0.9792);transform-origin:0 0;"><span style="color:#4285f4">G</span><span style="color:#ea4335">o</span><span style="color:#fbbc05">o</span><span style="color:#4285f4">g</span><span style="color:#34a853">l</span><span style="color:#ea4335">e</span></div>
<div class="t" style="left:148.02px;top:18.60px;font-size:24.47px;line-height:24.47px;font-weight:400;color:#5f6368;transform:scaleX(0.9798);transform-origin:0 0;-webkit-text-stroke:0.15px currentColor;">Search Console</div>
<div class="t" style="left:426.00px;top:20.70px;font-size:17.3px;line-height:17.3px;font-weight:400;color:#6b6f74;">Inspect any URL in '</div>
<div class="t" style="left:1800.50px;top:14.04px;font-size:12.42px;line-height:12.42px;font-weight:400;color:#ffffff;transform:scaleX(1.0818);transform-origin:0 0;">107</div>
<div class="t" style="left:60.70px;top:158.02px;font-size:15.27px;line-height:15.27px;font-weight:400;color:#1f1f1f;transform:scaleX(1.0945);transform-origin:0 0;-webkit-text-stroke:0.3px currentColor;">Overview</div>
<div class="t" style="left:59.63px;top:202.02px;font-size:15.27px;line-height:15.27px;font-weight:400;color:#1f1f1f;transform:scaleX(1.0713);transform-origin:0 0;-webkit-text-stroke:0.3px currentColor;">URL inspection</div>
<div class="t" style="left:33.29px;top:262.02px;font-size:15.27px;line-height:15.27px;font-weight:400;color:#7b7f83;transform:scaleX(1.1059);transform-origin:0 0;">Performance</div>
<div class="t" style="left:60.70px;top:306.02px;font-size:15.27px;line-height:15.27px;font-weight:400;color:#1f1f1f;transform:scaleX(1.0649);transform-origin:0 0;-webkit-text-stroke:0.3px currentColor;">Search results</div>
<div class="t" style="left:59.59px;top:350.02px;font-size:15.27px;line-height:15.27px;font-weight:400;color:#1f1f1f;transform:scaleX(1.1065);transform-origin:0 0;-webkit-text-stroke:0.3px currentColor;">Discover</div>
<div class="t" style="left:33.29px;top:410.72px;font-size:15.27px;line-height:15.27px;font-weight:400;color:#7b7f83;transform:scaleX(1.1098);transform-origin:0 0;">Indexing</div>
<div class="t" style="left:59.68px;top:454.72px;font-size:15.27px;line-height:15.27px;font-weight:400;color:#1f1f1f;transform:scaleX(1.0152);transform-origin:0 0;-webkit-text-stroke:0.3px currentColor;">Pages</div>
<div class="t" style="left:60.70px;top:498.82px;font-size:15.27px;line-height:15.27px;font-weight:400;color:#1f1f1f;transform:scaleX(1.0648);transform-origin:0 0;-webkit-text-stroke:0.3px currentColor;">Videos</div>
<div class="t" style="left:60.70px;top:543.22px;font-size:15.27px;line-height:15.27px;font-weight:400;color:#1f1f1f;transform:scaleX(1.0547);transform-origin:0 0;-webkit-text-stroke:0.3px currentColor;">Sitemaps</div>
<div class="t" style="left:59.66px;top:587.02px;font-size:15.27px;line-height:15.27px;font-weight:400;color:#1f1f1f;transform:scaleX(1.0426);transform-origin:0 0;-webkit-text-stroke:0.3px currentColor;">Removals</div>
<div class="t" style="left:33.31px;top:647.62px;font-size:15.27px;line-height:15.27px;font-weight:400;color:#7b7f83;transform:scaleX(1.0910);transform-origin:0 0;">Experience</div>
<div class="t" style="left:60.70px;top:690.82px;font-size:15.27px;line-height:15.27px;font-weight:400;color:#1f1f1f;transform:scaleX(1.0463);transform-origin:0 0;-webkit-text-stroke:0.3px currentColor;">Core Web Vitals</div>
<div class="t" style="left:59.75px;top:734.72px;font-size:15.27px;line-height:15.27px;font-weight:400;color:#1f1f1f;transform:scaleX(0.9456);transform-origin:0 0;-webkit-text-stroke:0.3px currentColor;">HTTPS</div>
<div class="t" style="left:33.33px;top:796.32px;font-size:15.27px;line-height:15.27px;font-weight:400;color:#7b7f83;transform:scaleX(1.0672);transform-origin:0 0;">Enhancements</div>
<div class="t" style="left:59.61px;top:839.92px;font-size:15.27px;line-height:15.27px;font-weight:400;color:#1f1f1f;transform:scaleX(1.0926);transform-origin:0 0;-webkit-text-stroke:0.3px currentColor;">Breadcrumbs</div>
<div class="t" style="left:60.70px;top:883.82px;font-size:15.27px;line-height:15.27px;font-weight:400;color:#1f1f1f;transform:scaleX(1.0606);transform-origin:0 0;-webkit-text-stroke:0.3px currentColor;">Videos</div>
<div class="t" style="left:34.40px;top:944.12px;font-size:15.27px;line-height:15.27px;font-weight:400;color:#7b7f83;transform:scaleX(1.0754);transform-origin:0 0;">Security &amp; Manual Actions</div>
<div class="t" style="left:59.64px;top:1004.92px;font-size:15.27px;line-height:15.27px;font-weight:400;color:#1f1f1f;transform:scaleX(1.0570);transform-origin:0 0;-webkit-text-stroke:0.3px currentColor;">Links</div>
<div class="t" style="left:60.70px;top:1049.22px;font-size:15.27px;line-height:15.27px;font-weight:400;color:#1f1f1f;transform:scaleX(1.0842);transform-origin:0 0;-webkit-text-stroke:0.3px currentColor;">Settings</div>
<div class="t" style="left:368.15px;top:90.85px;font-size:21.71px;line-height:21.71px;font-weight:400;color:#3c4043;transform:scaleX(1.0466);transform-origin:0 0;-webkit-text-stroke:0.45px currentColor;">Page indexing</div>
<div class="t" style="left:1885.63px;top:92.47px;font-size:15.09px;line-height:15.09px;font-weight:400;color:#3c4043;transform:scaleX(0.9750);transform-origin:0 0;-webkit-text-stroke:0.3px currentColor;">EXPORT</div>
<div class="t" style="left:369.20px;top:164.29px;font-size:16.01px;line-height:16.01px;font-weight:400;color:#1f1f1f;transform:scaleX(1.0196);transform-origin:0 0;">All known pages</div>
<div class="t" style="left:1791.71px;top:162.95px;font-size:16.65px;line-height:16.65px;font-weight:400;color:#6b6f74;transform:scaleX(0.9856);transform-origin:0 0;">Last updated:</div>
<div class="t" style="left:1895.42px;top:162.95px;font-size:16.65px;line-height:16.65px;font-weight:400;color:#202124;transform:scaleX(1.0780);transform-origin:0 0;">12/2/24</div>
<div class="t" style="left:704.71px;top:260.24px;font-size:14.54px;line-height:14.54px;font-weight:400;color:#fff;transform:scaleX(0.9899);transform-origin:0 0;">Not indexed</div>
<div class="t" style="left:685.63px;top:288.39px;font-size:35.42px;line-height:35.42px;font-weight:400;color:#fff;transform:scaleX(0.9662);transform-origin:0 0;">5.38K</div>
<div class="t" style="left:684.98px;top:331.27px;font-size:13.8px;line-height:13.8px;font-weight:400;color:#f4f4f4;transform:scaleX(1.0154);transform-origin:0 0;">13 reasons</div>
<div class="t" style="left:902.62px;top:260.24px;font-size:14.54px;line-height:14.54px;font-weight:400;color:#fff;transform:scaleX(0.9757);transform-origin:0 0;">Indexed</div>
<div class="t" style="left:882.37px;top:288.39px;font-size:35.42px;line-height:35.42px;font-weight:400;color:#fff;transform:scaleX(0.9646);transform-origin:0 0;">1.3K</div>
<div class="t" style="left:708.58px;top:394.38px;font-size:16.38px;line-height:16.38px;font-weight:400;color:#2f3336;transform:scaleX(1.0240);transform-origin:0 0;-webkit-text-stroke:0.15px currentColor;">Impressions</div>
<div class="t" style="left:675.26px;top:442.57px;font-size:12.51px;line-height:12.51px;font-weight:400;color:#5f6368;transform:scaleX(1.0411);transform-origin:0 0;">Pages</div>
<div class="t" style="left:683.90px;top:459.91px;font-size:11.87px;line-height:11.87px;font-weight:400;color:#5f6368;transform:scaleX(1.0659);transform-origin:0 0;">7.5K</div>
<div class="t" style="left:695.20px;top:520.91px;font-size:11.87px;line-height:11.87px;font-weight:400;color:#5f6368;transform:scaleX(1.0140);transform-origin:0 0;">5K</div>
<div class="t" style="left:684.00px;top:581.51px;font-size:11.87px;line-height:11.87px;font-weight:400;color:#5f6368;transform:scaleX(1.0618);transform-origin:0 0;">2.5K</div>
<div class="t" style="left:702.80px;top:642.91px;font-size:11.87px;line-height:11.87px;font-weight:400;color:#5f6368;transform:scaleX(1.0286);transform-origin:0 0;">0</div>
<div class="t" style="left:714.40px;top:666.32px;font-size:12.33px;line-height:12.33px;font-weight:400;color:#5f6368;transform:scaleX(1.1592);transform-origin:0 0;">9/4/24</div>
<div class="t" style="left:828.20px;top:666.32px;font-size:12.33px;line-height:12.33px;font-weight:400;color:#5f6368;transform:scaleX(1.1508);transform-origin:0 0;">9/16/24</div>
<div class="t" style="left:945.00px;top:666.32px;font-size:12.33px;line-height:12.33px;font-weight:400;color:#5f6368;transform:scaleX(1.1387);transform-origin:0 0;">9/28/24</div>
<div class="t" style="left:1059.00px;top:666.32px;font-size:12.33px;line-height:12.33px;font-weight:400;color:#5f6368;transform:scaleX(1.1427);transform-origin:0 0;">10/10/24</div>
<div class="t" style="left:1176.70px;top:666.32px;font-size:12.33px;line-height:12.33px;font-weight:400;color:#5f6368;transform:scaleX(1.1406);transform-origin:0 0;">10/22/24</div>
<div class="t" style="left:1297.30px;top:666.32px;font-size:12.33px;line-height:12.33px;font-weight:400;color:#5f6368;transform:scaleX(1.1670);transform-origin:0 0;">11/3/24</div>
<div class="t" style="left:1411.40px;top:666.32px;font-size:12.33px;line-height:12.33px;font-weight:400;color:#5f6368;transform:scaleX(1.1606);transform-origin:0 0;">11/15/24</div>
<div class="t" style="left:1527.70px;top:666.32px;font-size:12.33px;line-height:12.33px;font-weight:400;color:#5f6368;transform:scaleX(1.1627);transform-origin:0 0;">11/27/24</div>
<div class="t" style="left:765.30px;top:750.18px;font-size:15.55px;line-height:15.55px;font-weight:400;color:#1f1f1f;transform:scaleX(1.0502);transform-origin:0 0;">View data about indexed pages</div>
<div class="t" style="left:751.50px;top:905.08px;font-size:22.26px;line-height:22.26px;font-weight:400;color:#1f1f1f;transform:scaleX(1.0923);transform-origin:0 0;-webkit-text-stroke:0.3px currentColor;">Why pages aren’t indexed</div>
<div class="t" style="left:750.43px;top:939.10px;font-size:15.18px;line-height:15.18px;font-weight:400;color:#80868b;transform:scaleX(1.0669);transform-origin:0 0;">Pages that aren’t indexed can’t be served on Google</div>
<div class="t" style="left:684.48px;top:1009.37px;font-size:12.51px;line-height:12.51px;font-weight:400;color:#5f6368;transform:scaleX(1.0158);transform-origin:0 0;-webkit-text-stroke:0.3px currentColor;">Reason</div>
<div class="t" style="left:1100.60px;top:1009.67px;font-size:12.51px;line-height:12.51px;font-weight:400;color:#5f6368;transform:scaleX(1.0264);transform-origin:0 0;-webkit-text-stroke:0.3px currentColor;">Source</div>
<div class="t" style="left:1265.70px;top:1009.67px;font-size:12.51px;line-height:12.51px;font-weight:400;color:#1f1f1f;transform:scaleX(1.0848);transform-origin:0 0;-webkit-text-stroke:0.35px currentColor;">Validation</div>
<div class="t" style="left:1435.70px;top:1009.67px;font-size:12.51px;line-height:12.51px;font-weight:400;color:#5f6368;transform:scaleX(1.0330);transform-origin:0 0;-webkit-text-stroke:0.3px currentColor;">Trend</div>
<div class="t" style="left:1597.34px;top:1009.67px;font-size:12.51px;line-height:12.51px;font-weight:400;color:#5f6368;transform:scaleX(1.0645);transform-origin:0 0;-webkit-text-stroke:0.3px currentColor;">Pages</div>
<div class="t" style="left:684.31px;top:1065.80px;font-size:14.35px;line-height:14.35px;font-weight:400;color:#1f1f1f;transform:scaleX(0.9895);transform-origin:0 0;-webkit-text-stroke:0.3px currentColor;">Excluded by ‘noindex’ tag</div>
<div class="t" style="left:1100.60px;top:1065.80px;font-size:14.35px;line-height:14.35px;font-weight:400;color:#3c4043;transform:scaleX(0.9869);transform-origin:0 0;">Website</div>
<div class="t" style="left:1299.58px;top:1065.80px;font-size:14.35px;line-height:14.35px;font-weight:400;color:#1f1f1f;transform:scaleX(1.0185);transform-origin:0 0;-webkit-text-stroke:0.3px currentColor;">Not Started</div>
<div class="t" style="left:684.29px;top:1119.95px;font-size:14.35px;line-height:14.35px;font-weight:400;color:#1f1f1f;transform:scaleX(1.0104);transform-origin:0 0;-webkit-text-stroke:0.3px currentColor;">Page with redirect</div>
<div class="t" style="left:1100.60px;top:1119.95px;font-size:14.35px;line-height:14.35px;font-weight:400;color:#3c4043;transform:scaleX(0.9869);transform-origin:0 0;">Website</div>
<div class="t" style="left:1299.58px;top:1119.95px;font-size:14.35px;line-height:14.35px;font-weight:400;color:#1f1f1f;transform:scaleX(1.0185);transform-origin:0 0;-webkit-text-stroke:0.3px currentColor;">Not Started</div>
<div class="t" style="left:684.27px;top:1174.10px;font-size:14.35px;line-height:14.35px;font-weight:400;color:#1f1f1f;transform:scaleX(1.0266);transform-origin:0 0;-webkit-text-stroke:0.3px currentColor;">Not found (404)</div>
<div class="t" style="left:1100.60px;top:1174.10px;font-size:14.35px;line-height:14.35px;font-weight:400;color:#3c4043;transform:scaleX(0.9869);transform-origin:0 0;">Website</div>
<div class="t" style="left:1299.58px;top:1174.10px;font-size:14.35px;line-height:14.35px;font-weight:400;color:#1f1f1f;transform:scaleX(1.0185);transform-origin:0 0;-webkit-text-stroke:0.3px currentColor;">Not Started</div>
<div class="t" style="left:685.30px;top:1228.25px;font-size:14.35px;line-height:14.35px;font-weight:400;color:#1f1f1f;transform:scaleX(1.0055);transform-origin:0 0;-webkit-text-stroke:0.3px currentColor;">Alternate page with proper canonical tag</div>
<div class="t" style="left:1100.60px;top:1228.25px;font-size:14.35px;line-height:14.35px;font-weight:400;color:#3c4043;transform:scaleX(0.9869);transform-origin:0 0;">Website</div>
<div class="t" style="left:1299.58px;top:1228.25px;font-size:14.35px;line-height:14.35px;font-weight:400;color:#1f1f1f;transform:scaleX(1.0185);transform-origin:0 0;-webkit-text-stroke:0.3px currentColor;">Not Started</div>
<div class="t" style="left:684.28px;top:1282.40px;font-size:14.35px;line-height:14.35px;font-weight:400;color:#1f1f1f;transform:scaleX(1.0151);transform-origin:0 0;-webkit-text-stroke:0.3px currentColor;">Duplicate without user-selected canonical</div>
<div class="t" style="left:1100.60px;top:1282.40px;font-size:14.35px;line-height:14.35px;font-weight:400;color:#3c4043;transform:scaleX(0.9869);transform-origin:0 0;">Website</div>
<div class="t" style="left:1299.58px;top:1282.40px;font-size:14.35px;line-height:14.35px;font-weight:400;color:#1f1f1f;transform:scaleX(1.0185);transform-origin:0 0;-webkit-text-stroke:0.3px currentColor;">Not Started</div>
<div class="t" style="left:684.30px;top:1336.55px;font-size:14.35px;line-height:14.35px;font-weight:400;color:#1f1f1f;-webkit-text-stroke:0.3px currentColor;">Blocked due to other 4xx issue</div>
<div class="t" style="left:1100.60px;top:1336.55px;font-size:14.35px;line-height:14.35px;font-weight:400;color:#3c4043;transform:scaleX(0.9869);transform-origin:0 0;">Website</div>
<div class="t" style="left:1299.58px;top:1336.55px;font-size:14.35px;line-height:14.35px;font-weight:400;color:#1f1f1f;transform:scaleX(1.0185);transform-origin:0 0;-webkit-text-stroke:0.3px currentColor;">Not Started</div>
<div style="position:absolute;left:0.8px;top:434px;width:294.2px;height:62.4px;box-sizing:border-box;border:7px solid #02e703;border-radius:4px"></div>
<div style="position:absolute;left:645.9px;top:1092px;width:1028.7px;height:59.8px;box-sizing:border-box;border:6.6px solid #02e703;border-radius:4px"></div>
<svg style="position:absolute;left:0px;top:0px;filter:drop-shadow(0.6px 0.8px 0.6px rgba(60,60,60,.35))" width="1977" height="1376" viewBox="0 0 1977 1376"><path d="M329.4 465.2L382.3 465.2L373.8 475.5Q442.9 518.5 511.6 551.7Q514.2 554.6 510.9 555.3L364.5 493.6L361.2 508Z" fill="#02e703" stroke="#02e703" stroke-width="0.8" stroke-linejoin="round"/><path d="M457.3 1119.6Q520 1117.5 572 1110.2L568.8 1097.3L616.2 1121L569.3 1144.2L572.5 1131.9Q520 1126.5 457.3 1124.1A2.25 2.25 0 0 1 457.3 1119.6Z" fill="#02e703" stroke="#02e703" stroke-width="0.8" stroke-linejoin="round"/></svg>
</body></html>
